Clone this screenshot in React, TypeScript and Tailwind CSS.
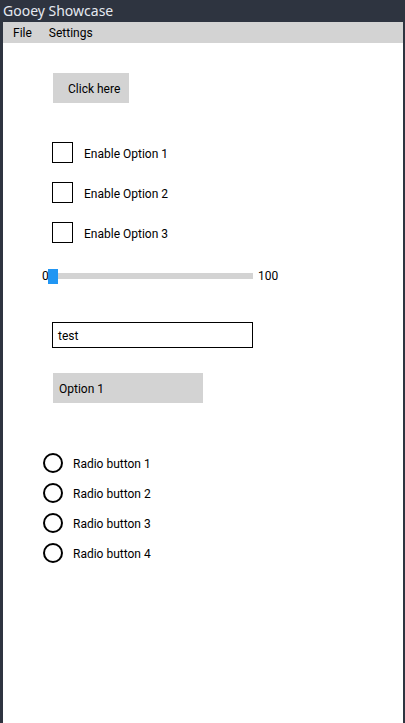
export default function App() {
  const checks = ['Enable Option 1', 'Enable Option 2', 'Enable Option 3'];
  const radios = ['Radio button 1', 'Radio button 2', 'Radio button 3', 'Radio button 4'];

  return (
    <div className="w-[405px] h-[723px] bg-[#2e3440] flex flex-col overflow-hidden font-['Roboto',sans-serif] text-[12px] text-black">
      {/* title bar */}
      <div className="h-[22px] pl-[3px] flex items-center text-[14px] leading-none text-[#e5e9f0] font-['Noto_Sans',sans-serif]">
        Gooey Showcase
      </div>

      <div className="flex-1 ml-[3px] mr-[2px] bg-white flex flex-col">
        {/* menu */}
        <div className="h-[21px] bg-[#d3d3d3] flex items-center gap-[17px] pl-[10px] pt-[1px]">
          <span>File</span>
          <span>Settings</span>
        </div>

        {/* button */}
        <button className="mt-[30px] ml-[50px] w-[76px] h-[30px] bg-[#d3d3d3] flex items-center pl-[15px] pt-[2px]">
          Click here
        </button>

        {/* checkboxes */}
        <div className="mt-[39px] ml-[49px] flex flex-col gap-[19px]">
          {checks.map((c) => (
            <div key={c} className="flex items-center h-[21px]">
              <div className="w-[21px] h-[21px] border border-black" />
              <span className="ml-[11px] pt-[2px]">{c}</span>
            </div>
          ))}
        </div>

        {/* slider */}
        <div className="mt-[25px] ml-[39px] flex items-center h-[15px]">
          <span className="w-[6px]">0</span>
          <div className="relative w-[205px] h-[6px] bg-[#d3d3d3]">
            <div className="absolute left-0 top-[-4px] w-[10px] h-[15px] bg-[#2196f3]" />
          </div>
          <span className="ml-[5px]">100</span>
        </div>

        {/* text input */}
        <div className="mt-[39px] ml-[49px] w-[201px] h-[26px] border border-black flex items-center pl-[5px] pt-[2px]">
          test
        </div>

        {/* dropdown */}
        <div className="mt-[25px] ml-[50px] w-[150px] h-[30px] bg-[#d3d3d3] flex items-center pl-[6px] pt-[2px]">
          Option 1
        </div>

        {/* radios */}
        <div className="mt-[50px] ml-[40px] flex flex-col gap-[10px]">
          {radios.map((r) => (
            <div key={r} className="flex items-center h-[20px]">
              <div className="w-[20px] h-[20px] rounded-full border-2 border-black" />
              <span className="ml-[10px] pt-[2px]">{r}</span>
            </div>
          ))}
        </div>
      </div>
    </div>
  );
}
